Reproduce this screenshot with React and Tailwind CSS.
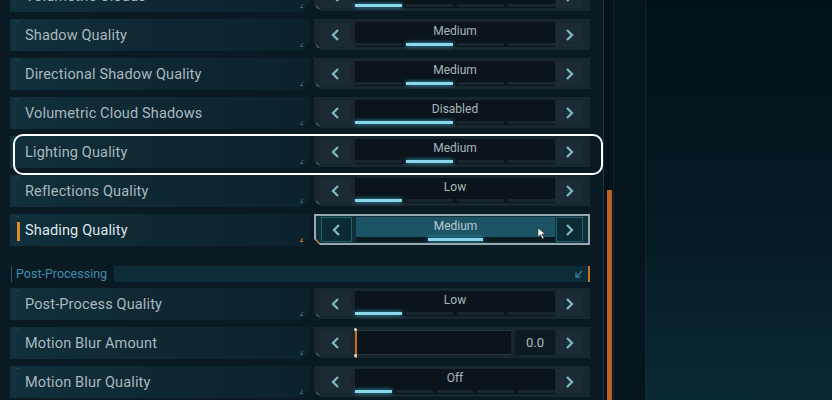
import React from 'react';

const rows = [
  { label: 'Volumetric Clouds', value: 'Low', cols: 4, segs: [1, 0, 0, 0] },
  { label: 'Shadow Quality', value: 'Medium', cols: 4, segs: [0, 1, 0, 0] },
  { label: 'Directional Shadow Quality', value: 'Medium', cols: 4, segs: [0, 1, 0, 0] },
  { label: 'Volumetric Cloud Shadows', value: 'Disabled', cols: 4, segs: [2, 0, 0] },
  { label: 'Lighting Quality', value: 'Medium', cols: 4, segs: [0, 1, 0, 0], outlined: true },
  { label: 'Reflections Quality', value: 'Low', cols: 4, segs: [1, 0, 0, 0] },
  { label: 'Shading Quality', value: 'Medium', cols: 3, segs: [0, 1, 0], selected: true },
];

const postRows = [
  { label: 'Post-Process Quality', value: 'Low', cols: 4, segs: [1, 0, 0, 0] },
  { label: 'Motion Blur Amount', slider: true, value: '0.0' },
  { label: 'Motion Blur Quality', value: 'Off', cols: 5, segs: [1, 0, 0, 0, 0] },
];

const font = { fontFamily: 'Roboto, "Liberation Sans", sans-serif' };

function Arrow({ dir }) {
  return (
    <svg width="9" height="12" viewBox="0 0 9 12">
      {dir === 'left' ? (
        <path d="M7 1 L2 6 L7 11" fill="none" stroke="#7cb3c2" strokeWidth="2.4" />
      ) : (
        <path d="M2 1 L7 6 L2 11" fill="none" stroke="#7cb3c2" strokeWidth="2.4" />
      )}
    </svg>
  );
}

function Bar({ cols, segs, selected }) {
  const gridCls = cols === 3 ? 'grid-cols-3' : cols === 5 ? 'grid-cols-5' : 'grid-cols-4';
  return (
    <div className={`grid ${gridCls} gap-x-[4px] ${selected ? 'px-[14px]' : ''}`}>
      {segs.map((s, i) => (
        <div
          key={i}
          className={`h-[3px] ${s === 2 ? 'col-span-2' : ''} ${
            s ? 'bg-[#8ad6ea] shadow-[0_0_4px_#3fb4d4]' : selected ? 'bg-transparent' : 'bg-[#172630]'
          }`}
        />
      ))}
    </div>
  );
}

function Control({ row }) {
  const sel = row.selected;
  return (
    <div
      className={`relative flex h-[31px] w-[276px] py-[3px] pl-[6px] pr-[7px] [clip-path:polygon(0_0,100%_0,100%_100%,6px_100%,0_calc(100%-6px))] ${
        sel ? 'bg-[#0f2f39] outline-2 outline-[#97a8ae] -outline-offset-2 pl-[7px]' : 'bg-[#18262f]'
      }`}
    >
      <div
        className={`flex w-[31px] items-center justify-center ${
          sel ? 'border border-[#1f6373] bg-[#0b2a34]' : 'bg-[#1c2a33]'
        }`}
      >
        <Arrow dir="left" />
      </div>
      {row.slider ? (
        <div className="ml-[4px] flex flex-1 gap-[4px]">
          <div className="relative flex-1 border-y border-[#26363f] bg-[#091319]">
            <div className="absolute left-0 top-[-2px] h-[29px] w-[2px] bg-[#c56d22]" />
            <div className="absolute left-[-1px] top-[-3px] h-[3px] w-[3px] rounded-full bg-[#d8d8d8]" />
            <div className="absolute bottom-[-3px] left-[-1px] h-[3px] w-[3px] rounded-full bg-[#d8d8d8]" />
          </div>
          <div className="flex w-[40px] items-center justify-center bg-[#0e1a21] text-[13px] text-[#aebbc1]">
            {row.value}
          </div>
        </div>
      ) : (
        <div
          className={`ml-[4px] flex flex-1 flex-col justify-between ${sel ? 'bg-[#1c5466]' : 'bg-[#0a141a]'}`}
        >
          <div className={`pt-[1px] text-center text-[12px] leading-[17px] ${sel ? 'text-[#b9c9cf]' : 'text-[#a9b6bc]'}`}>
            {row.value}
          </div>
          <div className={`pb-[1px] ${sel ? 'bg-[#0a1b22] pt-[1px]' : ''}`}>
            <Bar cols={row.cols} segs={row.segs} selected={sel} />
          </div>
        </div>
      )}
      <div
        className={`ml-[1px] flex w-[27px] items-center justify-center ${
          sel ? 'border border-[#1f6373] bg-[#0b2a34]' : 'bg-[#1c2a33]'
        }`}
      >
        <Arrow dir="right" />
      </div>
      <div
        className={`absolute bottom-[2px] left-[2px] h-0 w-0 border-b-[4px] border-r-[4px] border-r-transparent ${
          sel ? 'border-b-[#d07a26]' : 'border-b-[#4b5960]'
        }`}
      />
      {sel && (
        <svg className="absolute left-[223px] top-[13px]" width="9" height="13" viewBox="0 0 9 13">
          <path d="M1 1 L1 10 L3.5 7.8 L5.5 12 L7 11.2 L5 7.2 L8 7 Z" fill="#fff" stroke="#222" strokeWidth="0.6" />
        </svg>
      )}
    </div>
  );
}

function Row({ row }) {
  return (
    <div className="relative flex h-[32px] gap-[4px]">
      <div className="relative flex h-full w-[300px] items-stretch bg-gradient-to-r from-[#10303b] via-[#0e2833] to-[#0b222c] pl-[5px] [clip-path:polygon(0_0,100%_0,100%_calc(100%-10px),calc(100%-8px)_100%,0_100%)]">
        <div
          className={`flex flex-1 items-center pl-[9px] pt-[1px] text-[14.5px] tracking-[0.15px] ${
            row.selected ? 'border-l border-transparent text-[#dfe6e9]' : 'border-l border-[#14323f] text-[#aab8be]'
          }`}
          style={font}
        >
          {row.label}
        </div>
        <div className="absolute left-[5px] top-[2px] h-[1px] w-[4px] bg-[#1d4452]" />
        {row.selected && <div className="absolute left-[7px] top-[8px] h-[19px] w-[3px] bg-[#e08a2a]" />}
        <div
          className={`absolute bottom-[4px] right-[6px] h-[4px] w-[3px] border-b border-l ${
            row.selected ? 'border-[#d07a26]' : 'border-[#2b6a80]'
          } skew-x-[-30deg]`}
        />
      </div>
      <Control row={row} />
      {row.outlined && (
        <div className="pointer-events-none absolute left-[3px] top-[-2px] h-[41px] w-[590px] rounded-[10px] border-[2.5px] border-white" />
      )}
    </div>
  );
}

export default function App() {
  return (
    <div className="flex h-[400px] w-[832px] overflow-hidden bg-[#0a1a22]" style={font}>
      <div className="w-[600px] pl-[10px]">
        <div className="-mt-[20px] flex flex-col gap-[7px]">
          {rows.map((r) => (
            <Row key={r.label} row={r} />
          ))}
        </div>
        <div className="mt-[20px] flex h-[16px] w-[580px] gap-[7px] pl-[1px]">
          <div className="flex items-center border-l border-[#245a72] pl-[4px] text-[12.5px] text-[#3f8db3]">
            Post-Processing
          </div>
          <div className="flex flex-1 items-center justify-end gap-[5px] bg-[#0e2b38]">
            <svg width="8" height="8" viewBox="0 0 8 8">
              <path d="M7 1 L1.5 6.5 M1 2.5 L1 7 L5.5 7" fill="none" stroke="#2f7ea3" strokeWidth="1.3" />
            </svg>
            <div className="h-full w-[2px] bg-[#c8741f]" />
          </div>
        </div>
        <div className="mt-[6px] flex flex-col gap-[7px]">
          {postRows.map((r) => (
            <Row key={r.label} row={r} />
          ))}
        </div>
      </div>
      <div className="flex h-full w-[46px]">
        <div className="w-[3px] bg-[#0a1a22]" />
        <div className="w-[1px] bg-[#17343f]" />
        <div className="flex w-[9px] flex-col bg-[#061219] pl-[3px] pr-[1px]">
          <div className="h-[190px]" />
          <div className="flex-1 bg-[#b9641f]" />
        </div>
        <div className="w-[1px] bg-[#10252d]" />
        <div className="flex-1 bg-[#06141b]" />
        <div className="w-[1px] bg-[#0f2730]" />
      </div>
      <div className="flex-1 bg-gradient-to-b from-[#03111a] via-[#051821] to-[#0a2a33]" />
    </div>
  );
}
